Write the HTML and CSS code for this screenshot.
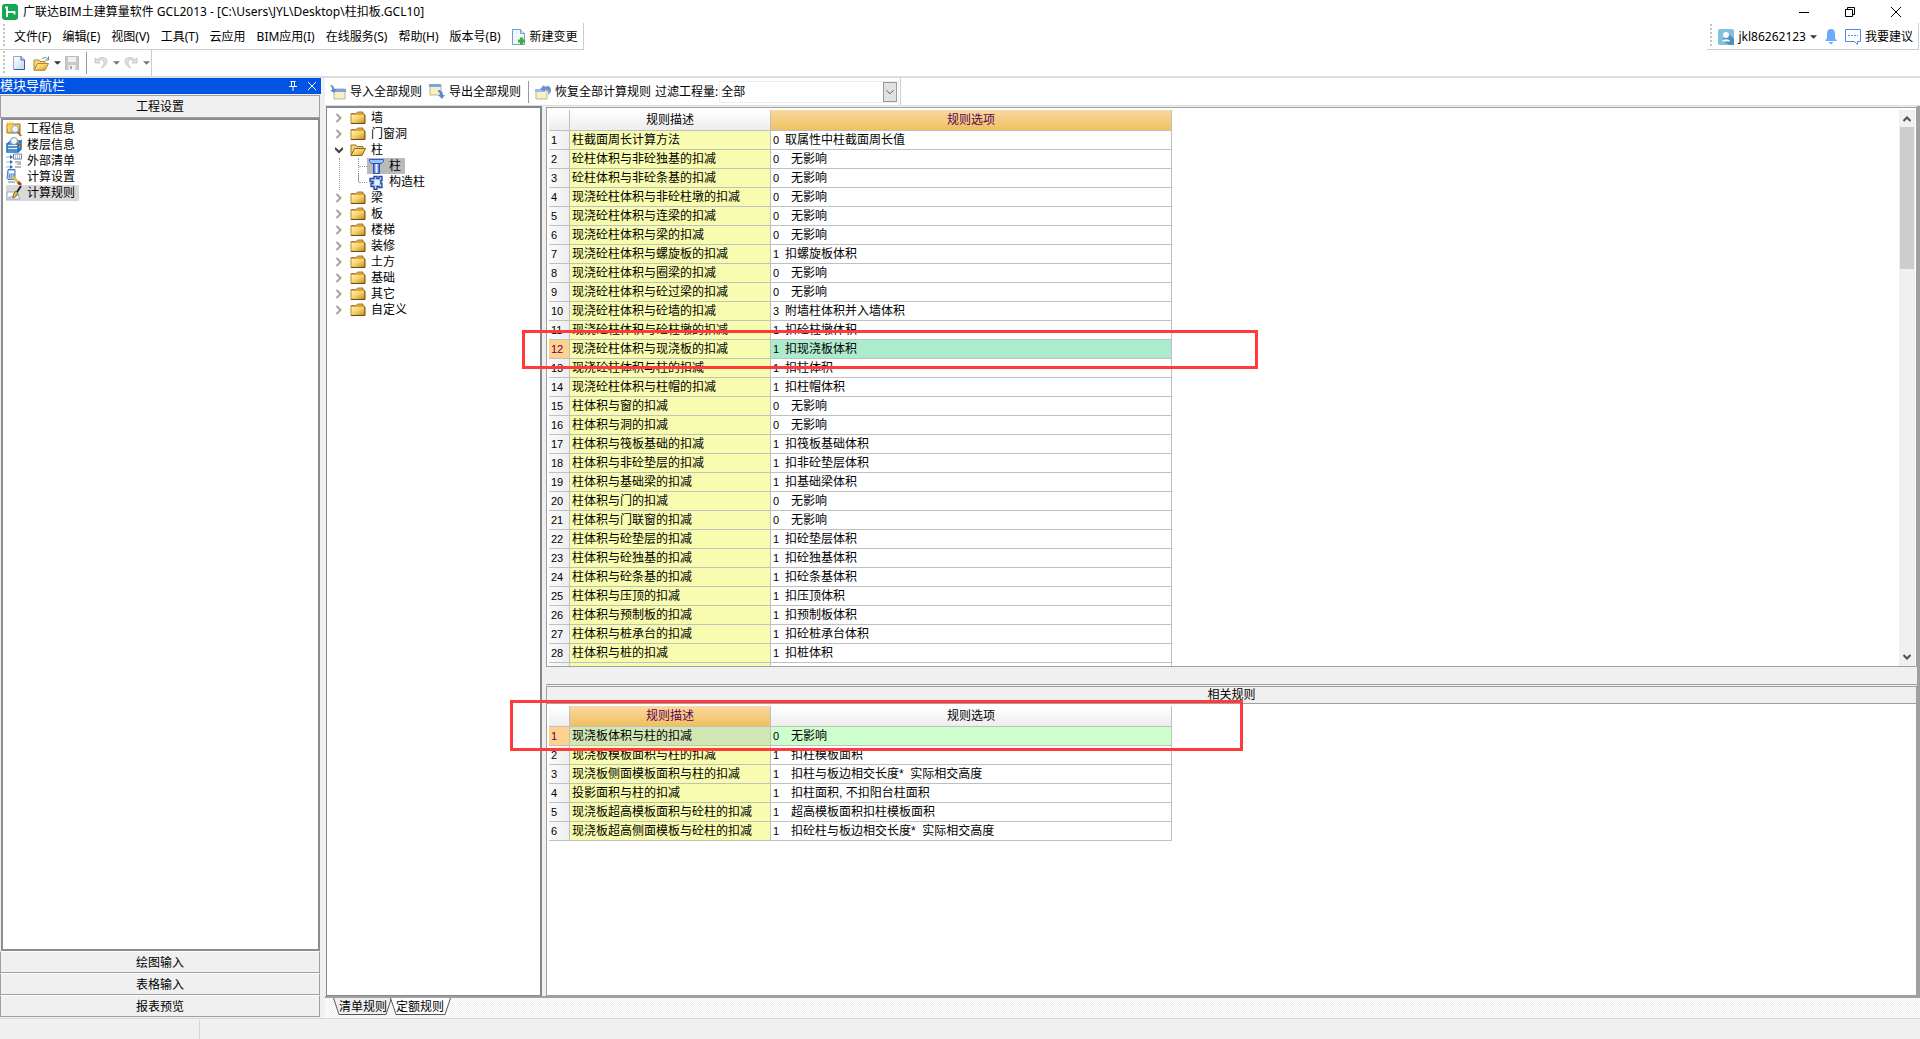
FILE: index.html
```html
<!DOCTYPE html>
<html lang="zh-CN">
<head>
<meta charset="utf-8">
<title>广联达BIM土建算量软件 GCL2013</title>
<link rel="stylesheet" href="styles.css">
</head>
<body>
<svg class="defs" width="0" height="0" aria-hidden="true">
  <defs>
    <linearGradient id="gold" x1="0" y1="0" x2="1" y2="1"><stop offset="0" stop-color="#fff2b0"/><stop offset=".5" stop-color="#f5cf62"/><stop offset="1" stop-color="#c98a1c"/></linearGradient>
    <linearGradient id="steel" x1="0" y1="0" x2="1" y2="0"><stop offset="0" stop-color="#2450b8"/><stop offset=".5" stop-color="#eaf3ff"/><stop offset="1" stop-color="#2450b8"/></linearGradient>
    <linearGradient id="paper" x1="0" y1="0" x2="1" y2="1"><stop offset="0" stop-color="#fff"/><stop offset="1" stop-color="#c3d6f2"/></linearGradient>
    <symbol id="folder" viewBox="0 0 16 14"><path d="M1 2.500h5l1.500-1.500H13v2h1.500V12.500H1z" fill="#dba53a" stroke="#a88238"/><path d="M1.500 4h13v8h-13z" fill="url(#gold)"/><path d="M1 12.500h14V4" fill="none" stroke="#6e4d12"/></symbol>
    <symbol id="folder-open" viewBox="0 0 16 14"><path d="M1 12V2h5l1 1.500h6V6" fill="#f3d77d" stroke="#9a7428"/><path d="M1 12.500 4.500 5.500h11L12 12.500z" fill="url(#gold)" stroke="#8f6416"/></symbol>
    <symbol id="chev" viewBox="0 0 8 10"><path d="M1.500 1 5.500 5l-4 4" fill="none" stroke="#a3a3a3" stroke-width="2"/></symbol>
    <symbol id="drop" viewBox="0 0 8 4"><path d="M0 0h8L4 4z" fill="currentColor"/></symbol>
    <symbol id="undo" viewBox="0 0 14 14"><path d="M1 2v5h5L4.300 5.300C7 2.500 10.500 3.500 10 7c-.3 2-1.500 3.500-3 5 4-1.500 6-4 6-6.500C13 1 7 0 3 3.800z" fill="#e2e2e2" stroke="#bcbcbc" stroke-width=".8"/></symbol>
  </defs>
</svg>
<div class="app">
  <header class="titlebar">
    <svg class="logo" width="16" height="16" viewBox="0 0 16 16"><rect width="16" height="16" rx="3" fill="#14a851"/><path d="M3 3.500h3M5 3v10M5 8h7.500v2.500" fill="none" stroke="#fff" stroke-width="1.800"/></svg>
    <h1 class="title">广联达BIM土建算量软件 GCL2013 - [C:\Users\JYL\Desktop\柱扣板.GCL10]</h1>
    <div class="window-controls">
      <button type="button" aria-label="最小化"><svg width="10" height="10"><path d="M0 5.500h10" stroke="#000"/></svg></button>
      <button type="button" aria-label="还原"><svg width="10" height="10" fill="none" stroke="#000"><path d="M.5 2.500h7v7h-7zM2.500 2V.5h7v7H8"/></svg></button>
      <button type="button" aria-label="关闭"><svg width="10" height="10"><path d="M0 0l10 10M10 0 0 10" stroke="#000"/></svg></button>
    </div>
  </header>

  <div class="menurow">
    <nav class="menubar">
      <button type="button">文件(F)</button>
      <button type="button">编辑(E)</button>
      <button type="button">视图(V)</button>
      <button type="button">工具(T)</button>
      <button type="button">云应用</button>
      <button type="button">BIM应用(I)</button>
      <button type="button">在线服务(S)</button>
      <button type="button">帮助(H)</button>
      <button type="button">版本号(B)</button>
      <button type="button"><svg width="14" height="16" viewBox="0 0 14 16"><path d="M.5.500h8l4 4v11H.5z" fill="#eef6fd" stroke="#6f9fc8"/><path d="M8.500.500v4h4" fill="#cfe2f5" stroke="#6f9fc8"/><path d="M9.500 8.500v7M6 12h7" stroke="#3fae35" stroke-width="3"/></svg>新建变更</button>
    </nav>
    <div class="account">
      <button type="button"><svg width="16" height="16" viewBox="0 0 16 16"><rect width="16" height="16" rx="2" fill="#83bfe0"/><path d="M9 3l7 7v6h-4l-8-4z" fill="#4a90bb"/><circle cx="8" cy="6" r="3" fill="#fff"/><path d="M4 12.500c0-3 8-3 8 0z" fill="#fff"/></svg>jkl86262123<svg class="drop" width="7" height="4"><use href="#drop"/></svg></button>
      <button type="button" aria-label="消息"><svg width="12" height="16" viewBox="0 0 12 16"><path d="M6 0c3 0 4 2 4 5v4l2 3H0l2-3V5c0-3 1-5 4-5zM3.500 13h5L6 15.500z" fill="#6babfa"/></svg></button>
      <button type="button"><svg width="16" height="16" viewBox="0 0 16 16"><path d="M.5.500h15v12h-3v3l-3-3h-9z" fill="#fff" stroke="#4a8bea"/><path d="M3 6.500h10" stroke="#4a8bea" stroke-dasharray="2 1"/></svg>我要建议</button>
    </div>
  </div>

  <div class="toolrow">
    <div class="toolbar">
      <button type="button" aria-label="新建"><svg width="12" height="14" viewBox="0 0 12 14"><path d="M.5.500h8l3 3v10H.5z" fill="url(#paper)" stroke="#9aabc9"/><path d="M8 .5V4h3.500M11.500 4v9.500H1" fill="none" stroke="#3f5f94"/></svg></button>
      <button type="button" class="open" aria-label="打开"><svg width="17" height="15" viewBox="0 0 17 15"><path d="M1 14V4h5l1 1.500h5V8" fill="#f3d77d" stroke="#b08934"/><path d="M1 14.300 4.500 7.500h11L12 14.300z" fill="url(#gold)" stroke="#b5822a"/><path d="M9 3c2-2 4-2 6 0M15.500.500V4H12" fill="none" stroke="#6785a8"/></svg><svg class="drop" width="7" height="4"><use href="#drop"/></svg></button>
      <button type="button" class="off" aria-label="保存"><svg width="14" height="14" viewBox="0 0 14 14"><path d="M.5.500h13v13H.5z" fill="#c9c9c9" stroke="#bbb"/><path d="M3 1h8v5H3zM3.500 9h7v5h-7z" fill="#f2f2f2"/><path d="M5 10h2v3H5z" fill="#aaa"/></svg></button>
      <span class="sep"></span>
      <button type="button" class="off history" aria-label="撤销"><svg width="14" height="14"><use href="#undo"/></svg><svg class="drop" width="7" height="4"><use href="#drop"/></svg></button>
      <button type="button" class="off history" aria-label="恢复"><svg class="flip" width="14" height="14"><use href="#undo"/></svg><svg class="drop" width="7" height="4"><use href="#drop"/></svg></button>
    </div>
  </div>

  <main class="main">
    <aside class="sidebar">
      <div class="side-title"><h2>模块导航栏</h2>
        <button type="button" aria-label="固定"><svg width="8" height="10" viewBox="0 0 8 10" fill="none" stroke="#fff"><path d="M1.500.5h5M2.500.5v5M5.500.5v5M0 5.500h8M4 6v4"/></svg></button>
        <button type="button" aria-label="关闭"><svg width="8" height="8"><path d="M0 0l8 8M8 0 0 8" stroke="#fff"/></svg></button>
      </div>
      <button type="button" class="section first">工程设置</button>
      <ul class="navlist">
        <li><button type="button"><svg width="16" height="16" viewBox="0 0 16 16"><path d="M1 3h13v9H1z" fill="url(#gold)" stroke="#a26f14"/><path d="M4 0v8M0 4h8M1 1l6 6M7 1 1 7" stroke="#ffc61c"/><circle cx="9" cy="8" r="3.500" fill="#e8f4ff" stroke="#87a3c5"/><path d="M12 11l3 4" stroke="#a86422" stroke-width="2"/></svg>工程信息</button></li>
        <li><button type="button"><svg width="16" height="16" viewBox="0 0 16 16"><path d="M1 7l4-3h10v3M1 7h11v8H1zM12 7l3-3v8l-3 3M1 10h11l3-3M1 13h11l3-3" fill="#d9edff" stroke="#2372b8" stroke-width="1.500"/><circle cx="8" cy="4" r="3.500" fill="#f2faff" stroke="#7593b5"/><path d="M11 6l4 3" stroke="#a86422" stroke-width="2"/></svg>楼层信息</button></li>
        <li><button type="button"><svg width="16" height="16" viewBox="0 0 16 16"><path d="M7.500 1h8v5h-8z" fill="#fff" stroke="#6a83a9"/><path d="M9 3h5M9 5h5" stroke="#789" stroke-dasharray="1 1"/><path d="M0 4h6M0 9h6M0 14h6" stroke="#8eb4e6"/><path d="M4 2l3 2-3 2zM4 7l3 2-3 2zM4 12l3 2-3 2z" fill="#2c66c4"/><path d="M9 9h6M11 11h4M9 14h6" stroke="#777"/></svg>外部清单</button></li>
        <li><button type="button"><svg width="16" height="16" viewBox="0 0 16 16"><path d="M2 .5h7v10H2l-1-1z" fill="#a9c9f4" stroke="#4779bd"/><path d="M3 2h5v2H3z" fill="#fff"/><path d="M3 6h5M3 8h5" stroke="#315f9f" stroke-dasharray="1 1"/><path d="M2 13h7" stroke="#aebdd2" stroke-width="2"/><path d="M6 7l7 7" stroke="#e5bb4a" stroke-width="2.500"/><path d="M12 13l3 3" stroke="#a33a2b" stroke-width="3"/></svg>计算设置</button></li>
        <li><button type="button" class="current"><svg width="16" height="16" viewBox="0 0 16 16"><path d="M1 7h10l3 7H1z" fill="#fff" stroke="#9aa6b5"/><path d="M2 13l10-3" stroke="#b9c8da" stroke-width="2"/><path d="M15 1 11 7" stroke="#222" stroke-width="2"/><path d="M10 6c-2 1-3 4-3 7 2 0 4-3 5-5z" fill="#e0b34c" stroke="#67450f" stroke-width=".7"/></svg>计算规则</button></li>
      </ul>
      <button type="button" class="section">绘图输入</button>
      <button type="button" class="section">表格输入</button>
      <button type="button" class="section">报表预览</button>
    </aside>

    <section class="workspace">
      <div class="rulebar">
        <button type="button"><svg width="16" height="16" viewBox="0 0 16 16"><path d="M4 5h11v10H4z" fill="#f8efc4" stroke="#c2b684"/><path d="M5 5h11v3H5z" fill="#7aa4e0"/><path d="M0 1c3 0 4 1 4 4h3L4 9 0 6h2c0-2 0-3-2-5z" fill="#5c8bd9"/></svg>导入全部规则</button>
        <button type="button"><svg width="16" height="16" viewBox="0 0 16 16"><path d="M1 1h11v10H1z" fill="#f8efc4" stroke="#c2b684"/><path d="M0 0h12v3H0z" fill="#7aa4e0"/><path d="M9 6c3 0 5 2 5 5h2l-3 4-4-4h2c0-2-1-3-2-3z" fill="#5c8bd9"/></svg>导出全部规则</button>
        <span class="sep"></span>
        <button type="button"><svg width="16" height="16" viewBox="0 0 16 16"><path d="M1 6h11v9H1z" fill="#f8efc4" stroke="#c2b684"/><path d="M0 5h9v3H0z" fill="#9db9e4"/><path d="M5 5l4-4 1 2c2-2 6-1 6 3 0 3-2 4-3 5 1-3 0-5-3-5v2z" fill="#6c93d6"/></svg>恢复全部计算规则</button>
        <div class="filter">
          <label for="filter">过滤工程量:</label>
          <span class="combo"><select id="filter"><option>全部</option></select><svg width="9" height="5" viewBox="0 0 9 5"><path d="M.5.500l4 4 4-4" fill="none" stroke="#444"/></svg></span>
        </div>
      </div>

      <div class="panes">
        <ul class="tree">
          <li><svg class="tw" width="8" height="10"><use href="#chev"/></svg><svg width="16" height="14"><use href="#folder"/></svg><span>墙</span></li>
          <li><svg class="tw" width="8" height="10"><use href="#chev"/></svg><svg width="16" height="14"><use href="#folder"/></svg><span>门窗洞</span></li>
          <li><svg class="tw" width="8" height="10" viewBox="0 0 8 10"><path d="M0 3l4 4 4-4" fill="none" stroke="#404040" stroke-width="2"/></svg><svg width="16" height="14"><use href="#folder-open"/></svg><span>柱</span></li>
          <li class="sub">
            <ul>
              <li><span class="node chosen"><svg width="15" height="15" viewBox="0 0 15 15"><path d="M.5.500h14v2l-2 2h-10l-2-2z" fill="#9cc0f8" stroke="#2c5ecb"/><path d="M4.500 4.500h6v10h-6z" fill="url(#steel)" stroke="#2450b8"/></svg>柱</span></li>
              <li><span class="node"><svg width="15" height="15" viewBox="0 0 15 15"><path d="M5 1.500h3v2h2v-2h3v4h-1v3h1v4h-3v-1H8v3H5v-3H2v-3h2v-2H1v-3h4z" fill="#bcd6fb" stroke="#1d449e" stroke-width="1.300"/><path d="M6 5h4v5H6z" fill="#eaf3ff"/></svg>构造柱</span></li>
            </ul>
          </li>
          <li><svg class="tw" width="8" height="10"><use href="#chev"/></svg><svg width="16" height="14"><use href="#folder"/></svg><span>梁</span></li>
          <li><svg class="tw" width="8" height="10"><use href="#chev"/></svg><svg width="16" height="14"><use href="#folder"/></svg><span>板</span></li>
          <li><svg class="tw" width="8" height="10"><use href="#chev"/></svg><svg width="16" height="14"><use href="#folder"/></svg><span>楼梯</span></li>
          <li><svg class="tw" width="8" height="10"><use href="#chev"/></svg><svg width="16" height="14"><use href="#folder"/></svg><span>装修</span></li>
          <li><svg class="tw" width="8" height="10"><use href="#chev"/></svg><svg width="16" height="14"><use href="#folder"/></svg><span>土方</span></li>
          <li><svg class="tw" width="8" height="10"><use href="#chev"/></svg><svg width="16" height="14"><use href="#folder"/></svg><span>基础</span></li>
          <li><svg class="tw" width="8" height="10"><use href="#chev"/></svg><svg width="16" height="14"><use href="#folder"/></svg><span>其它</span></li>
          <li><svg class="tw" width="8" height="10"><use href="#chev"/></svg><svg width="16" height="14"><use href="#folder"/></svg><span>自定义</span></li>
        </ul>

        <div class="grids">
          <div class="pane upper">
            <div class="scroller">
              <table class="grid">
                <colgroup><col class="c-no"><col class="c-desc"><col class="c-opt"></colgroup>
                <thead><tr><th></th><th>规则描述</th><th class="hot">规则选项</th></tr></thead>
                <tbody>
                  <tr><th>1</th><td>柱截面周长计算方法</td><td><span class="code">0</span>取属性中柱截面周长值</td></tr>
                  <tr><th>2</th><td>砼柱体积与非砼独基的扣减</td><td><span class="code wide">0</span>无影响</td></tr>
                  <tr><th>3</th><td>砼柱体积与非砼条基的扣减</td><td><span class="code wide">0</span>无影响</td></tr>
                  <tr><th>4</th><td>现浇砼柱体积与非砼柱墩的扣减</td><td><span class="code wide">0</span>无影响</td></tr>
                  <tr><th>5</th><td>现浇砼柱体积与连梁的扣减</td><td><span class="code wide">0</span>无影响</td></tr>
                  <tr><th>6</th><td>现浇砼柱体积与梁的扣减</td><td><span class="code wide">0</span>无影响</td></tr>
                  <tr><th>7</th><td>现浇砼柱体积与螺旋板的扣减</td><td><span class="code">1</span>扣螺旋板体积</td></tr>
                  <tr><th>8</th><td>现浇砼柱体积与圈梁的扣减</td><td><span class="code wide">0</span>无影响</td></tr>
                  <tr><th>9</th><td>现浇砼柱体积与砼过梁的扣减</td><td><span class="code wide">0</span>无影响</td></tr>
                  <tr><th>10</th><td>现浇砼柱体积与砼墙的扣减</td><td><span class="code">3</span>附墙柱体积并入墙体积</td></tr>
                  <tr><th>11</th><td>现浇砼柱体积与砼柱墩的扣减</td><td><span class="code">1</span>扣砼柱墩体积</td></tr>
                  <tr class="active"><th>12</th><td>现浇砼柱体积与现浇板的扣减</td><td><span class="code">1</span>扣现浇板体积</td></tr>
                  <tr><th>13</th><td>现浇砼柱体积与柱的扣减</td><td><span class="code">1</span>扣柱体积</td></tr>
                  <tr><th>14</th><td>现浇砼柱体积与柱帽的扣减</td><td><span class="code">1</span>扣柱帽体积</td></tr>
                  <tr><th>15</th><td>柱体积与窗的扣减</td><td><span class="code wide">0</span>无影响</td></tr>
                  <tr><th>16</th><td>柱体积与洞的扣减</td><td><span class="code wide">0</span>无影响</td></tr>
                  <tr><th>17</th><td>柱体积与筏板基础的扣减</td><td><span class="code">1</span>扣筏板基础体积</td></tr>
                  <tr><th>18</th><td>柱体积与非砼垫层的扣减</td><td><span class="code">1</span>扣非砼垫层体积</td></tr>
                  <tr><th>19</th><td>柱体积与基础梁的扣减</td><td><span class="code">1</span>扣基础梁体积</td></tr>
                  <tr><th>20</th><td>柱体积与门的扣减</td><td><span class="code wide">0</span>无影响</td></tr>
                  <tr><th>21</th><td>柱体积与门联窗的扣减</td><td><span class="code wide">0</span>无影响</td></tr>
                  <tr><th>22</th><td>柱体积与砼垫层的扣减</td><td><span class="code">1</span>扣砼垫层体积</td></tr>
                  <tr><th>23</th><td>柱体积与砼独基的扣减</td><td><span class="code">1</span>扣砼独基体积</td></tr>
                  <tr><th>24</th><td>柱体积与砼条基的扣减</td><td><span class="code">1</span>扣砼条基体积</td></tr>
                  <tr><th>25</th><td>柱体积与压顶的扣减</td><td><span class="code">1</span>扣压顶体积</td></tr>
                  <tr><th>26</th><td>柱体积与预制板的扣减</td><td><span class="code">1</span>扣预制板体积</td></tr>
                  <tr><th>27</th><td>柱体积与桩承台的扣减</td><td><span class="code">1</span>扣砼桩承台体积</td></tr>
                  <tr><th>28</th><td>柱体积与桩的扣减</td><td><span class="code">1</span>扣桩体积</td></tr>
                  <tr><th></th><td></td><td></td></tr>
                </tbody>
              </table>
              <div class="scrollbar">
                <svg width="8" height="6" viewBox="0 0 8 6"><path d="M.5 5 4 1.500 7.500 5" fill="none" stroke="#505050" stroke-width="2"/></svg>
                <div class="thumb"></div>
                <svg width="8" height="6" viewBox="0 0 8 6"><path d="M.5 1 4 4.500 7.500 1" fill="none" stroke="#505050" stroke-width="2"/></svg>
              </div>
            </div>
            <div class="mark mark-upper"></div>
          </div>
          <div class="splitter"></div>
          <h2 class="related-title">相关规则</h2>
          <div class="pane lower">
            <div class="scroller">
              <table class="grid">
                <colgroup><col class="c-no"><col class="c-desc"><col class="c-opt"></colgroup>
                <thead><tr><th></th><th class="hot">规则描述</th><th>规则选项</th></tr></thead>
                <tbody>
                  <tr class="linked"><th>1</th><td>现浇板体积与柱的扣减</td><td><span class="code wide">0</span>无影响</td></tr>
                  <tr><th>2</th><td>现浇板模板面积与柱的扣减</td><td><span class="code wide">1</span>扣柱模板面积</td></tr>
                  <tr><th>3</th><td>现浇板侧面模板面积与柱的扣减</td><td><span class="code wide">1</span>扣柱与板边相交长度*&nbsp; 实际相交高度</td></tr>
                  <tr><th>4</th><td>投影面积与柱的扣减</td><td><span class="code wide">1</span>扣柱面积, 不扣阳台柱面积</td></tr>
                  <tr><th>5</th><td>现浇板超高模板面积与砼柱的扣减</td><td><span class="code wide">1</span>超高模板面积扣柱模板面积</td></tr>
                  <tr><th>6</th><td>现浇板超高侧面模板与砼柱的扣减</td><td><span class="code wide">1</span>扣砼柱与板边相交长度*&nbsp; 实际相交高度</td></tr>
                </tbody>
              </table>
            </div>
            <div class="mark mark-lower"></div>
          </div>
        </div>
      </div>

      <div class="tabs">
        <button type="button"><svg width="60" height="17" viewBox="0 0 60 17"><path d="M.5 0 6 16.500h47L58.500 0" fill="#f0f0f0" stroke="#555"/></svg><span>清单规则</span></button>
        <button type="button"><svg width="62" height="17" viewBox="0 0 62 17"><path d="M.5 0 6 16.500h49L60.500 0" fill="#fff" stroke="#555"/></svg><span>定额规则</span></button>
      </div>
    </section>
  </main>
  <footer class="statusbar"><span></span></footer>
</div>
</body>
</html>
```
FILE: styles.css
```css
* { box-sizing: border-box; }
body {
  margin: 0;
  background: #fff;
  color: #000;
  font: 12px/16px "Liberation Sans", "Noto Sans CJK SC", sans-serif;
}
button, select {
  font: inherit;
  color: inherit;
  background: none;
  border: 0;
  padding: 0;
  margin: 0;
  border-radius: 0;
}
button { display: flex; align-items: center; white-space: nowrap; }
ul { list-style: none; margin: 0; padding: 0; }
h1, h2 { margin: 0; font-size: 12px; font-weight: 400; }
svg { flex: none; display: block; }
.defs { position: absolute; }

.app { display: flex; flex-direction: column; height: 100vh; overflow: hidden; }

.titlebar, .menurow, .toolrow, .rulebar { font-family: "Noto Sans", "Noto Sans CJK SC", sans-serif; }

/* Title bar */
.titlebar { display: flex; align-items: center; height: 23px; padding-left: 2px; flex: none; }
.title { flex: 1; padding-left: 5px; }
.window-controls { display: flex; height: 20px; padding-right: 2px; gap: 1px; }
.window-controls button { width: 45px; justify-content: center; }

/* Menu and tool bars */
.menurow { display: flex; justify-content: space-between; flex: none; padding-right: 1px; }
.menubar, .account, .toolbar {
  display: flex;
  align-items: center;
  height: 27px;
  border-right: 1px solid #ccc;
  border-bottom: 1px solid #ccc;
  position: relative;
}
.menubar::before, .account::before, .toolbar::before {
  content: "";
  position: absolute;
  left: 3px;
  top: 1px;
  bottom: 3px;
  border-left: 2px dotted #c4c4c4;
}
.menubar { gap: 11px; padding: 2px 5px 0 14px; }
.menubar button, .account button { gap: 4px; }
.account { gap: 8px; padding: 2px 5px 0 11px; }
.drop { color: #333; }
.toolrow { flex: none; border-bottom: 2px solid #dcdcdc; display: flex; }
.toolbar { height: 26px; padding: 0 1px 0 13px; border-bottom: 0; }
.toolbar button { gap: 4px; }
.toolbar .open { margin: 0 4px 0 8px; }
.toolbar .history { gap: 5px; margin-right: 4px; }
.toolbar .history:last-child { margin-right: 0; }
.off .drop { color: #777; }
.flip { transform: scaleX(-1); }
.sep { width: 1px; height: 22px; background: #999; }
.toolbar .sep { margin: 0 7px; }

/* Body */
.main { display: flex; flex: 1; min-height: 0; background: #f0f0f0; }

.sidebar { width: 321px; flex: none; display: flex; flex-direction: column; padding-bottom: 1px; }
.side-title {
  display: flex;
  align-items: center;
  height: 16px;
  margin-bottom: 1px;
  padding-right: 5px;
  gap: 11px;
  background: #0054e3;
  color: #fff;
}
.side-title h2 { flex: 1; font-size: 13px; }
.section {
  justify-content: center;
  height: 22px;
  margin-right: 1px;
  padding-top: 1px;
  border: 1px solid #a0a0a0;
  border-top-color: #fff;
  background: #f0f0f0;
}
.section.first { height: 23px; border-top-color: #a0a0a0; }
.navlist {
  flex: 1;
  margin: 0 1px;
  padding: 1px 3px;
  background: #fff;
  border: 2px solid #8b8b90;
}
.navlist button { height: 16px; gap: 5px; padding: 0 4px 0 0; }
.navlist .current { background: #d9d9d9; }

.workspace { flex: 1; min-width: 0; display: flex; flex-direction: column; padding-left: 4px; }
.rulebar {
  display: flex;
  align-items: center;
  height: 28px;
  padding-left: 5px;
  background: #fff;
  border-bottom: 1px solid #ddd;
}
.rulebar button { gap: 4px; margin-right: 7px; }
.rulebar .sep { margin-right: 6px; }
.rulebar .sep + button { margin-right: 4px; }
.filter {
  display: flex;
  align-items: center;
  align-self: stretch;
  gap: 1px;
  padding-right: 1px;
  border-right: 1px solid #ccc;
}
.combo {
  position: relative;
  width: 180px;
  height: 22px;
  border: 1px solid #eee;
  display: flex;
}
.combo select { appearance: none; flex: 1; padding-left: 1px; background: #fff; }
.combo svg {
  position: absolute;
  right: 1px;
  top: 0;
  width: 14px;
  height: 20px;
  padding: 0 2px;
  background: #e1e1e1;
  border: 1px solid #999;
  pointer-events: none;
}

.panes { display: flex; flex: 1; min-height: 0; padding-left: 1px; border-bottom: 2px solid #a0a0a0; }

/* Component tree */
.tree { width: 216px; flex: none; background: #fff; border: 1px solid #828790; border-right-width: 2px; border-top-width: 2px; padding-top: 2px; }
.tree > li { display: flex; align-items: center; height: 16px; padding-left: 8px; }
.tree > li > svg + svg { margin-left: 7px; }
.tree > li > span { padding-left: 5px; }
.tree > .sub { height: 32px; padding-left: 12px; align-items: stretch; }
.sub > ul { border-left: 1px dotted #999; padding-left: 18px; }
.sub > ul > li { display: flex; align-items: center; height: 16px; border-left: 1px dotted #999; }
.sub > ul > li:last-child { border-left: 0; padding-left: 1px; background: linear-gradient(#999, #999) 0 0 / 1px 8px no-repeat; }
.sub > ul > li::before { content: ""; width: 8px; border-top: 1px dotted #999; }
.node { display: flex; align-items: center; gap: 5px; height: 16px; padding: 0 4px 0 2px; }
.node.chosen { background: #bababa; }

/* Rule grids */
.grids { flex: 1; min-width: 0; display: flex; flex-direction: column; padding-top: 1px; margin-left: 4px; border-right: 3px solid #a0a0a0; }
.pane { position: relative; display: flex; min-height: 0; }
.upper { flex: 559 1 0; }
.lower { flex: 293 1 0; }
.scroller {
  flex: 1;
  display: flex;
  justify-content: space-between;
  align-items: flex-start;
  overflow: hidden;
  padding: 2px 1px 0 2px;
  background: #fff;
  border: 1px solid #a0a0a0;
}
.grid { border-collapse: separate; border-spacing: 0; table-layout: fixed; width: 623px; }
.c-no { width: 21px; }
.c-desc { width: 201px; }
.c-opt { width: 401px; }
.grid th, .grid td {
  height: 19px;
  padding: 0 2px;
  border-right: 1px solid #c0c0c0;
  border-bottom: 1px solid #c0c0c0;
  font-weight: 400;
  white-space: nowrap;
  overflow: hidden;
  text-align: left;
}
.grid thead th { height: 21px; text-align: center; background: linear-gradient(#fff, #ededed); }
.grid thead .hot { background: linear-gradient(#fad9a0, #f0c060); color: #5a005a; }
.grid tbody th { background: linear-gradient(90deg, #fafafa, #eee); font-size: 11px; }
.grid td:nth-child(2) { background: #f8fcae; }
.grid .active th, .grid .linked th { background: #ffd28c; color: #5a005a; }
.active td:nth-child(3) { background: #adebcf; }
.linked td:nth-child(3) { background: #cfc; }
.grid .linked td:nth-child(2) { background: #d2e6b4; }
.code { display: inline-block; width: 12px; font-size: 11px; }
.code.wide { width: 18px; }
.scrollbar {
  align-self: stretch;
  width: 16px;
  display: flex;
  flex-direction: column;
  align-items: center;
  background: #f0f0f0;
  padding: 6px 0;
}
.thumb { width: 14px; height: 142px; margin: 5px 0 auto; background: #cdcdcd; }
.splitter { height: 18px; flex: none; border-bottom: 1px solid #a0a0a0; margin-bottom: 1px; }
.related-title {
  flex: none;
  height: 17px;
  text-align: center;
  border: 1px solid #a0a0a0;
  border-bottom: 0;
  line-height: 17px;
}

/* Callout frames */
.mark { position: absolute; border: 3px solid #ff3a3a; }
.mark-upper { left: -24px; top: 223px; width: 736px; height: 39px; }
.mark-lower { left: -36px; top: -3px; width: 733px; height: 51px; z-index: 1; }

/* Sheet tabs */
.tabs {
  display: flex;
  height: 20px;
  flex: none;
  padding-left: 8px;
  background: repeating-conic-gradient(#fff 0 25%, #f0f0f0 0 50%) 0 0 / 2px 2px;
}
.tabs button { position: relative; height: 17px; margin-right: -3px; }
.tabs span { position: absolute; left: 6px; top: 1px; }

.statusbar { flex: none; height: 21px; background: #f0f0f0; border-top: 1px solid #d7d7d7; display: flex; }
.statusbar span { width: 200px; border-right: 1px solid #d7d7d7; margin-top: 1px; }
```
